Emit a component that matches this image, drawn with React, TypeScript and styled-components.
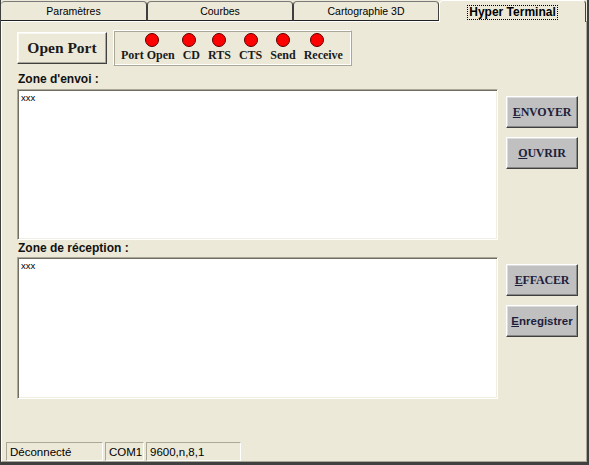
import React from "react";
import styled, { createGlobalStyle } from "styled-components";

const GlobalStyle = createGlobalStyle`
    html, body {
        margin: 0;
        padding: 0;
        background: #ece9d8;
    }
`;

const tabs = ["Paramètres", "Courbes", "Cartographie 3D", "Hyper Terminal"];

const indicators = [
    { label: "Port Open", shift: 4 },
    { label: "CD", shift: -2 },
    { label: "RTS", shift: 0 },
    { label: "CTS", shift: 0 },
    { label: "Send", shift: 0 },
    { label: "Receive", shift: -6 },
];

export default function App() {
    return (
        <>
            <GlobalStyle />
            <Window>
                <TabBar>
                    {tabs.map((tab, i) => (
                        <Tab key={tab} selected={i === 3} width={i === 3 ? 147 : 146}>
                            {i === 3 ? <Focused>{tab}</Focused> : tab}
                        </Tab>
                    ))}
                </TabBar>
                <Panel>
                    <TopRow>
                        <OpenPortButton>Open Port</OpenPortButton>
                        <LedBox>
                            {indicators.map((ind) => (
                                <Indicator key={ind.label}>
                                    <Led shift={ind.shift} />
                                    <LedLabel>{ind.label}</LedLabel>
                                </Indicator>
                            ))}
                        </LedBox>
                    </TopRow>

                    <ZoneLabel>Zone d'envoi :</ZoneLabel>
                    <ZoneRow>
                        <TextBox height={151} defaultValue="xxx" />
                        <ButtonColumn>
                            <ActionButton>
                                <u>E</u>NVOYER
                            </ActionButton>
                            <ActionButton>
                                <u>O</u>UVRIR
                            </ActionButton>
                        </ButtonColumn>
                    </ZoneRow>

                    <ZoneLabel second>Zone de réception :</ZoneLabel>
                    <ZoneRow>
                        <TextBox height={142} defaultValue="xxx" />
                        <ButtonColumn>
                            <ActionButton>
                                <u>E</u>FFACER
                            </ActionButton>
                            <ActionButton sans>
                                <u>E</u>nregistrer
                            </ActionButton>
                        </ButtonColumn>
                    </ZoneRow>

                    <StatusBar>
                        <StatusPanel width={97}>Déconnecté</StatusPanel>
                        <StatusPanel width={39}>COM1</StatusPanel>
                        <StatusPanel width={95}>9600,n,8,1</StatusPanel>
                    </StatusBar>
                </Panel>
            </Window>
        </>
    );
}

const Window = styled.div`
    width: 589px;
    height: 465px;
    box-sizing: border-box;
    display: flex;
    flex-direction: column;
    background: #ece9d8;
    border-left: 1px solid #404040;
    border-right: 2px solid #404040;
    border-bottom: 3px solid #404040;
    font-family: "Liberation Sans", Arial, sans-serif;
    color: #000;
    overflow: hidden;
`;

const TabBar = styled.div`
    display: flex;
    height: 21px;
    flex-shrink: 0;
    position: relative;
    z-index: 1;
`;

const Tab = styled.div<{ selected?: boolean; width: number }>`
    box-sizing: border-box;
    width: ${({ width }) => width}px;
    flex-shrink: 0;
    display: flex;
    align-items: center;
    justify-content: center;
    font-size: ${({ selected }) => (selected ? "12px" : "10.5px")};
    font-weight: ${({ selected }) => (selected ? "bold" : "normal")};
    background: #ece9d8;
    border-radius: 4px 4px 0 0;
    border-top: 1px solid ${({ selected }) => (selected ? "#fff" : "#7a7a7a")};
    border-left: 1px solid ${({ selected }) => (selected ? "#fff" : "#404040")};
    border-right: 1px solid #404040;
    border-bottom: ${({ selected }) => (selected ? "none" : "1px solid #202020")};
    box-shadow: ${({ selected }) => (selected ? "none" : "0 1px 0 #fff")};
    height: ${({ selected }) => (selected ? "22px" : "20px")};
    margin-top: ${({ selected }) => (selected ? "0" : "1px")};
    padding-top: ${({ selected }) => (selected ? "1px" : "0")};
    &:first-child {
        border-left: none;
    }
`;

const Focused = styled.span`
    outline: 1px dotted #000;
    padding: 0 1px;
    line-height: 13px;
`;

const Panel = styled.div`
    flex: 1;
    display: flex;
    flex-direction: column;
    box-sizing: border-box;
    border-left: 1px solid #fff;
    border-right: 1px solid #aca899;
    border-bottom: 1px solid #aca899;
    padding: 0 0 0 15px;
`;

const TopRow = styled.div`
    display: flex;
    align-items: center;
    gap: 6px;
    margin-top: 9px;
    height: 36px;
`;

const OpenPortButton = styled.button`
    width: 90px;
    height: 32px;
    box-sizing: border-box;
    padding: 0;
    background: #ece9d8;
    font-family: "Liberation Serif", "Times New Roman", serif;
    font-weight: bold;
    font-size: 15.5px;
    color: #1a1a1a;
    border: 1px solid;
    border-color: #fff #404040 #404040 #fff;
    box-shadow: inset -1px -1px 0 #aca899, inset 1px 1px 0 #f8f7f0;
`;

const LedBox = styled.div`
    box-sizing: border-box;
    height: 36px;
    width: 239px;
    display: flex;
    gap: 8px;
    padding: 2px 0 0 7px;
    border: 1px solid;
    border-color: #fff #aca899 #aca899 #fff;
    box-shadow: inset 1px 1px 0 #aca899, inset -1px -1px 0 #fff;
`;

const Indicator = styled.div`
    display: flex;
    flex-direction: column;
    align-items: center;
`;

const Led = styled.div<{ shift: number }>`
    width: 12px;
    height: 12px;
    border-radius: 50%;
    background: #ff0000;
    border: 1px solid #5a0000;
    margin-left: ${({ shift }) => shift * 2}px;
`;

const LedLabel = styled.span`
    font-family: "Liberation Serif", "Times New Roman", serif;
    font-weight: bold;
    font-size: 12px;
    line-height: 14px;
    margin-top: 1px;
    color: #1a1a1a;
    white-space: nowrap;
`;

const ZoneLabel = styled.div<{ second?: boolean }>`
    font-weight: bold;
    font-size: 12px;
    line-height: 14px;
    color: #111;
    margin: ${({ second }) => (second ? "1px 0 2px 1px" : "6px 0 3px 1px")};
`;

const ZoneRow = styled.div`
    display: flex;
    align-items: flex-start;
    gap: 8px;
`;

const TextBox = styled.textarea<{ height: number }>`
    box-sizing: border-box;
    width: 481px;
    height: ${({ height }) => height}px;
    resize: none;
    margin: 0;
    padding: 2px 3px;
    background: #fff;
    font-family: "Liberation Sans", Arial, sans-serif;
    font-size: 9.5px;
    line-height: 11px;
    color: #000;
    border: 1px solid;
    border-color: #aca899 #fff #fff #aca899;
    box-shadow: inset 1px 1px 0 #716f64, inset -1px -1px 0 #f1efe2;
    outline: none;
    overflow: hidden;
`;

const ButtonColumn = styled.div`
    display: flex;
    flex-direction: column;
    gap: 9px;
    padding-top: 7px;
`;

const ActionButton = styled.button<{ sans?: boolean }>`
    width: 72px;
    height: 32px;
    box-sizing: border-box;
    padding: 0;
    background: #c0c0c0;
    font-family: ${({ sans }) =>
        sans ? `"Liberation Sans", Arial, sans-serif` : `"Liberation Serif", "Times New Roman", serif`};
    font-weight: bold;
    font-size: ${({ sans }) => (sans ? "11.5px" : "12px")};
    letter-spacing: ${({ sans }) => (sans ? "0" : "-0.2px")};
    color: #1e1e3c;
    border: 1px solid;
    border-color: #fff #404040 #404040 #fff;
    box-shadow: inset -1px -1px 0 #888, inset 1px 1px 0 #dcdcdc;
`;

const StatusBar = styled.div`
    display: flex;
    gap: 2px;
    margin: auto 0 0 -11px;
    height: 19px;
`;

const StatusPanel = styled.div<{ width: number }>`
    box-sizing: border-box;
    width: ${({ width }) => width}px;
    height: 19px;
    display: flex;
    align-items: center;
    padding-left: 3px;
    font-size: 11.5px;
    color: #000;
    border: 1px solid;
    border-color: #aca899 #fff #fff #aca899;
`;
